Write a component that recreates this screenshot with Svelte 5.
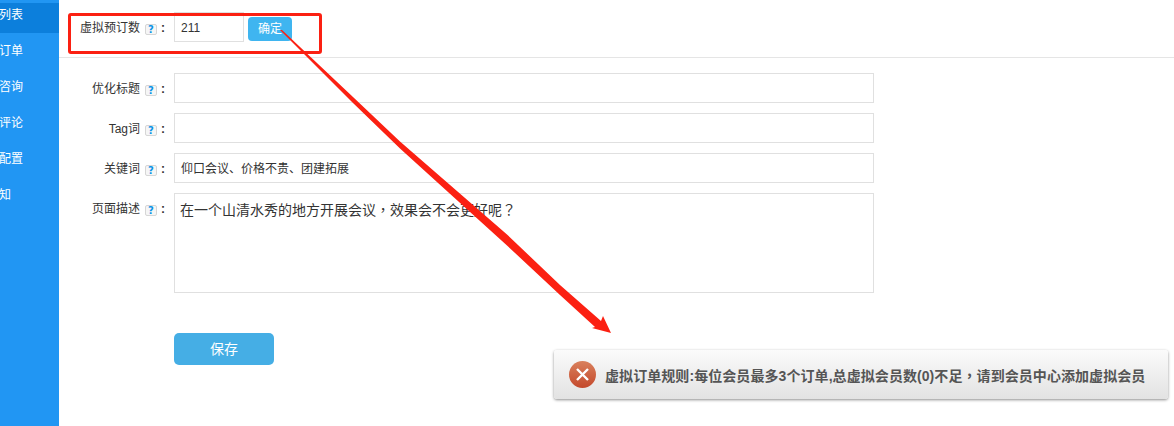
<script>
  const menu = ['列表', '订单', '咨询', '评论', '配置', '知'];
  const fields = [
    { label: '优化标题', value: '' },
    { label: 'Tag词', value: '' },
    { label: '关键词', value: '仰口会议、价格不贵、团建拓展' }
  ];
</script>

<div class="page">
  <aside class="side">
    {#each menu as item, i}
      <div class="item" class:active={i === 0}>{item}</div>
    {/each}
  </aside>

  <main class="main">
    <div class="top">
      <div class="label">虚拟预订数<span class="help">?</span><b>:</b></div>
      <div class="input small">211</div>
      <div class="ok">确定</div>
    </div>

    <div class="form">
      {#each fields as f}
        <div class="row">
          <div class="label">{f.label}<span class="help">?</span><b>:</b></div>
          <div class="input">{f.value}</div>
        </div>
      {/each}
      <div class="row">
        <div class="label">页面描述<span class="help">?</span><b>:</b></div>
        <div class="input area">在一个山清水秀的地方开展会议<span class="mid">，</span>效果会不会更好呢<span class="mid">？</span></div>
      </div>
      <div class="save">保存</div>
    </div>
  </main>

  <div class="toast">
    <svg class="err" width="27" height="27" viewBox="0 0 27 27">
      <defs>
        <linearGradient id="errfill" x1="0" y1="0" x2="0" y2="1">
          <stop offset="0" stop-color="#d9805c" />
          <stop offset="1" stop-color="#c4492c" />
        </linearGradient>
      </defs>
      <circle cx="13.5" cy="13.5" r="13.5" fill="url(#errfill)" />
      <path d="M8 8L19 19M19 8L8 19" stroke="#fff" stroke-width="2.4" fill="none" />
    </svg>
    <span>虚拟订单规则:每位会员最多3个订单,总虚拟会员数(0)不足<span class="mid">，</span>请到会员中心添加虚拟会员</span>
  </div>

  <div class="redbox"></div>
  <svg class="arrow" width="1174" height="426" viewBox="0 0 1174 426">
    <polygon points="280,30 282,30 353,97 400,141.5 507,234.5 560,285 601,321 603,316 611,333 592,328 595,327 560,295 507,245.5 400,148.5 353,103" fill="#fb2012" />
  </svg>
</div>

<style>
  :global(body) {
    margin: 0;
    background: #fff;
    font-family: "Liberation Sans", "Noto Sans CJK SC", sans-serif;
    font-size: 12px;
    color: #333;
  }

  .page {
    position: relative;
    display: flex;
    width: 1174px;
    height: 426px;
    overflow: hidden;
  }

  .side {
    width: 59px;
    flex: none;
    background: #2196f3;
    padding-top: 3px;
    box-sizing: border-box;
  }

  .item {
    height: 30px;
    line-height: 23px;
    margin-bottom: 6px;
    padding-top: 1px;
    box-sizing: border-box;
    color: #fff;
    font-size: 12px;
    text-indent: -1px;
    overflow: hidden;
  }

  .item.active {
    background: #0c7fdc;
  }

  .main {
    flex: 1;
    min-width: 0;
  }

  .top {
    display: flex;
    align-items: flex-start;
    height: 45px;
    padding-top: 12px;
    border-bottom: 1px solid #e5e5e5;
  }

  .form {
    padding-top: 15px;
  }

  .row {
    display: flex;
    margin-bottom: 10px;
  }

  .label {
    width: 115px;
    flex: none;
    height: 30px;
    line-height: 30px;
    padding-top: 1px;
    text-align: right;
    white-space: nowrap;
    box-sizing: border-box;
    padding-right: 9px;
  }

  .label b {
    display: inline-block;
    width: 6px;
    margin-left: 2px;
    text-align: right;
  }

  .help {
    display: inline-block;
    box-sizing: border-box;
    width: 12px;
    height: 11px;
    line-height: 10px;
    margin-left: 5px;
    border: 1px solid #d6d6d6;
    border-radius: 2px;
    background: #f6f6f6;
    color: #0a93e6;
    font-family: "DejaVu Sans", sans-serif;
    font-size: 10px;
    font-weight: bold;
    text-align: center;
    vertical-align: -1px;
  }

  .input {
    width: 700px;
    height: 30px;
    line-height: 30px;
    border: 1px solid #e0e0e0;
    box-sizing: border-box;
    padding: 0 6px;
    color: #333;
  }

  .input.small {
    width: 70px;
  }

  .input.area {
    height: 100px;
    line-height: 30px;
    font-size: 14px;
    padding: 0 5px;
  }

  /* centred full-width punctuation, the SC forms sit in the corner */
  .mid {
    font-family: "Noto Sans CJK TC", sans-serif;
  }

  .ok {
    width: 44px;
    height: 24px;
    line-height: 25px;
    margin: 5px 0 0 4px;
    border-radius: 4px;
    background: #3fb5f0;
    color: #fff;
    font-size: 12px;
    text-align: center;
  }

  .save {
    width: 100px;
    height: 32px;
    line-height: 33px;
    margin: 40px 0 0 115px;
    border-radius: 5px;
    background: #45aee5;
    color: #fff;
    font-size: 14px;
    text-align: center;
  }

  .toast {
    position: absolute;
    left: 554px;
    top: 350px;
    width: 614px;
    height: 49px;
    display: flex;
    align-items: center;
    box-sizing: border-box;
    padding-left: 15px;
    gap: 9px;
    border-radius: 3px;
    background: linear-gradient(#fbfbfb, #e2e2e2);
    box-shadow: 0 1px 3px rgba(0, 0, 0, 0.45);
    color: #555;
    font-size: 14px;
    font-weight: bold;
    letter-spacing: 0.07px;
    white-space: nowrap;
  }

  .redbox {
    position: absolute;
    left: 68px;
    top: 13px;
    width: 254px;
    height: 41px;
    box-sizing: border-box;
    border: 3px solid #fb2012;
    border-radius: 3px;
  }

  .arrow {
    position: absolute;
    left: 0;
    top: 0;
    pointer-events: none;
  }
</style>
